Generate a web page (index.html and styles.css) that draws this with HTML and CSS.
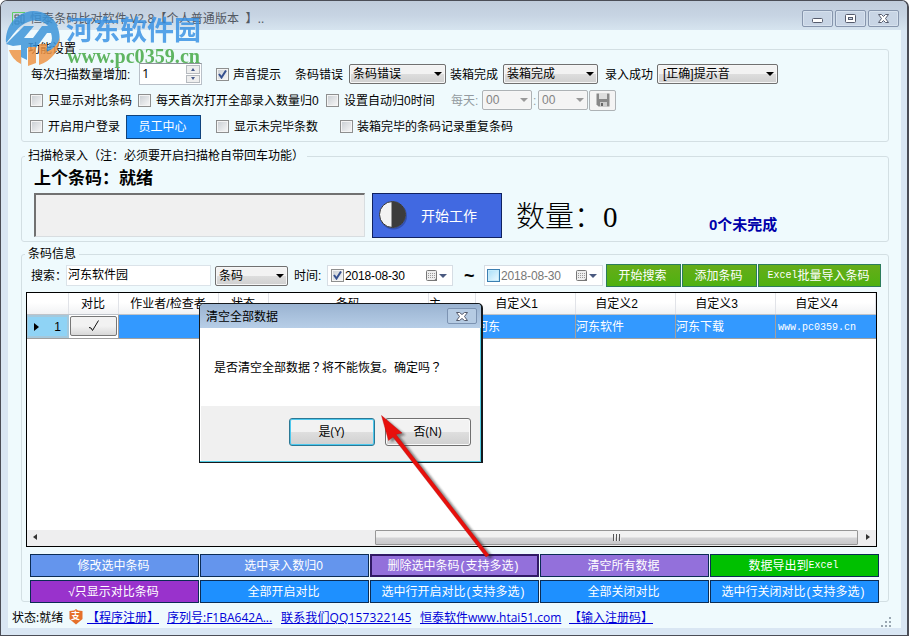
FILE: index.html
```html
<!DOCTYPE html>
<html lang="zh-CN">
<head>
<meta charset="utf-8">
<title>恒泰条码比对软件</title>
<link rel="stylesheet" href="styles.css">
</head>
<body>
<div class="window">
  <header class="titlebar">
    <svg class="app-icon" width="14" height="14" viewBox="0 0 14 14"><path d="M.5 13.500V.5H13" fill="none" stroke="#5fcf65"/><path d="M3 3h4v3H3zm6 0h3v8H9zM3 9h4v3H3z" fill="none" stroke="#555"/></svg>
    <span class="title">恒泰条码比对软件 V2.8【个人普通版本&nbsp; 】..</span>
    <div class="caption-buttons">
      <span class="cap"><svg width="30" height="16"><rect x="9.500" y="7.500" width="10" height="4" rx="1" fill="#fff" stroke="#555b6c"/></svg></span>
      <span class="cap"><svg width="30" height="16"><rect x="9.500" y="3.500" width="10" height="8" rx="1" fill="#fff" stroke="#555b6c"/><rect x="12.500" y="6.500" width="4" height="2" fill="#ccd7e7" stroke="#555b6c"/></svg></span>
      <span class="cap"><svg width="30" height="16"><path d="M9.500 3.500h3l2 2 2-2h3l-3 4 3 4h-3l-2-2-2 2h-3l3-4z" fill="#fff" stroke="#555b6c"/></svg></span>
    </div>
  </header>
  <main class="client">
    <section class="group settings">
      <div class="legend">功能设置</div>
      <div class="row row1">
        <span class="indent">每次扫描数量增加:</span>
        <div class="spinner"><span>1</span><div class="spin-buttons"><i><b class="up"></b></i><i><b class="down"></b></i></div></div>
        <span class="check"><svg width="9" height="9"><path d="M1 4l2.500 3.500L8 .5" /></svg></span><span>声音提示</span>
        <span>条码错误</span><div class="select w97">条码错误</div>
        <span>装箱完成</span><div class="select w95">装箱完成</div>
        <span>录入成功</span><div class="select bracketed">[正确]提示音</div>
      </div>
      <div class="row row2">
        <span class="check"></span><span>只显示对比条码</span>
        <span class="check"></span><span>每天首次打开全部录入数量归0</span>
        <span class="check"></span><span>设置自动归0时间</span>
        <span class="muted">每天:</span><div class="select disabled">00</div><span class="muted">:</span><div class="select disabled">00</div>
        <div class="save"><svg width="14" height="14"><path d="M.5.5h13v13h-11l-2-2z" fill="#888"/><path d="M3 0h8v6H3z" fill="#ddd"/><path d="M4 9h7v5H4z" fill="#ccc"/><path d="M5 10h2v3H5z" fill="#666"/></svg></div>
      </div>
      <div class="row row3">
        <span class="check"></span><span>开启用户登录</span><button class="staff">员工中心</button>
        <span class="check"></span><span>显示未完毕条数</span>
        <span class="check"></span><span>装箱完毕的条码记录重复条码</span>
      </div>
    </section>
    <section class="group scan">
      <div class="legend">扫描枪录入（注：必须要开启扫描枪自带回车功能）</div>
      <div class="last-code">上个条码：就绪</div>
      <div class="scan-row">
        <div class="scan-input"></div>
        <button class="start"><svg width="30" height="30"><circle cx="15.500" cy="16" r="13.500" fill="#263878" opacity=".5"/><circle cx="14.500" cy="14.500" r="13" fill="#f3f3f3" stroke="#333"/><path d="M13.500 1.500h1a13 13 0 0 1 0 26h-1z" fill="#3c3c3c"/></svg><span>开始工作</span></button>
        <div class="count">数量：<span>0</span></div>
        <div class="pending">0个未完成</div>
      </div>
    </section>
    <section class="group info">
      <div class="legend">条码信息</div>
      <div class="search-row">
        <span class="indent">搜索：</span><div class="input">河东软件园</div><div class="select w73">条码</div>
        <span>时间:</span>
        <div class="date"><span class="check"><svg width="9" height="9"><path d="M1 4l2.500 3.500L8 .5" /></svg></span><span class="day">2018-08-30</span><svg class="cal" width="22" height="12"><rect x=".5" y=".5" width="10" height="10" rx="1" fill="#eee" stroke="#777"/><path d="M2 3.500h7M2 5.500h7M2 7.500h7" stroke="#999" stroke-dasharray="1 1"/><path d="M7.500 11L11 7.500V11z" fill="#777"/><path d="M13 4h8l-4 4z" fill="#4a5a80"/></svg></div>
        <span class="tilde">~</span>
        <div class="date off"><span class="check hot"></span><span class="day">2018-08-30</span><svg class="cal" width="22" height="12"><rect x=".5" y=".5" width="10" height="10" rx="1" fill="#eee" stroke="#777"/><path d="M2 3.500h7M2 5.500h7M2 7.500h7" stroke="#999" stroke-dasharray="1 1"/><path d="M7.500 11L11 7.500V11z" fill="#777"/><path d="M13 4h8l-4 4z" fill="#4a5a80"/></svg></div>
        <button class="green">开始搜索</button><button class="green">添加条码</button><button class="green"><span class="mono">Excel</span>批量导入条码</button>
      </div>
      <div class="table">
        <div class="tr head"><span></span><span>对比</span><span>作业者/检查者</span><span>状态</span><span>条码</span><span class="left">主</span><span>自定义1</span><span>自定义2</span><span>自定义3</span><span>自定义4</span></div>
        <div class="tr data"><span class="rowhead"><i></i>1</span><span class="tick-cell"><b><svg width="12" height="12"><path d="M1 7.500l2 .5 1.500 2.500L10.500.5" fill="none" stroke="#111"/></svg></b></span><span></span><span></span><span></span><span></span><span>河东</span><span>河东软件</span><span>河东下载</span><span class="mono url">www.pc0359.cn</span></div>
        <div class="blank"></div>
        <div class="scrollbar"><i class="arrow-l"></i><div class="thumb"><i></i><i></i><i></i></div><i class="arrow-r"></i></div>
      </div>
      <div class="actions">
        <button class="corn">修改选中条码</button><button class="corn">选中录入数归0</button><button class="purple focus">删除选中条码<em>(</em>支持多选<em>)</em></button><button class="purple">清空所有数据</button><button class="lime">数据导出到<span class="mono">Excel</span></button>
        <button class="orchid">√只显示对比条码</button><button class="blue">全部开启对比</button><button class="blue">选中行开启对比<em>(</em>支持多选<em>)</em></button><button class="blue">全部关闭对比</button><button class="blue">选中行关闭对比<em>(</em>支持多选<em>)</em></button>
      </div>
    </section>
    <footer class="status">
      <span>状态:就绪</span>
      <span class="shield"><svg width="14" height="16" viewBox="0 0 14 16"><path d="M7 0l2 1.500 4.500.5v8L7 15.500.500 10V2L5 1.500z" fill="#e5702a"/></svg><b>支</b></span>
      <a>【程序注册】</a><a>序列号:F1BA642A...</a><a class="qq">联系我们QQ157322145</a><a>恒泰软件www.htai51.com</a><a>【输入注册码】</a>
      <svg class="grip" width="11" height="11"><path d="M8 0h2v2H8zM4 4h2v2H4zM8 4h2v2H8zM0 8h2v2H0zM4 8h2v2H4zM8 8h2v2H8z" fill="#9aa7b2"/></svg>
    </footer>
  </main>

  <div class="dialog">
    <div class="dialog-title"><span>清空全部数据</span><span class="dialog-close"><svg width="28" height="15"><path d="M8.500 3.500h3l2.500 2 2.500-2h3l-3 4 3 4h-3l-2.500-2-2.500 2h-3l3-4z" fill="#fff" stroke="#555b6c"/></svg></span></div>
    <div class="dialog-body">是否清空全部数据<span class="mark" lang="zh-TW">？</span>将不能恢复。确定吗<span class="mark" lang="zh-TW">？</span></div>
    <div class="dialog-foot"><button class="dlg-btn default">是(Y)</button><button class="dlg-btn">否(N)</button></div>
  </div>

  <svg class="pointer" width="909" height="636">
    <defs><filter id="soft" x="-10%" y="-10%" width="120%" height="120%"><feGaussianBlur stdDeviation="1.200"/></filter></defs>
    <path d="M382 416l20.500 17-5.500 1.500 93 120.500-3.500 2L393 437l-4.500 3.500z" fill="#222" opacity=".5" transform="translate(3 2)" filter="url(#soft)"/>
    <path d="M381.500 415.500l20.500 17.500-6 1.500 93 120.500-3 2L393 437l-4.500 3.500z" fill="#e8100c" stroke="#b80d0d" stroke-width=".4"/>
  </svg>

  <svg class="watermark" width="210" height="72">
    <g opacity=".84">
      <path d="M6 43C5 25 17 12 33 11c11 0 20 6 25 15l-9 1c-5-6-13-8-21-5C17 26 13 36 6 43z" fill="#3b94d9"/>
      <path d="M6 44l18-18h10L24 38h9l9-12h15c6 13 1 25-9 28l-2-6c6-4 7-9 5-15h-4L36 48h-9V60l-6-3V45l-8 1z" fill="#3b94d9"/>
      <path d="M9 50h12v14C15 61 11 56 9 50zm19-3h8v16l-8 3zm11-3h8l-1 8c8-3 12-8 14-15 0 14-9 24-21 28z" fill="#ee9445"/>
    </g>
    <text x="66" y="40" textLength="135" lengthAdjust="spacingAndGlyphs" class="wm-name">河东软件园</text>
    <text x="67" y="63" textLength="133" lengthAdjust="spacingAndGlyphs" class="wm-url">www.pc0359.cn</text>
  </svg>
</div>
</body>
</html>
```
FILE: styles.css
```css
* { box-sizing: border-box; }
body { margin: 0; background: #fff; font: 12px/16px "Liberation Sans", "Noto Sans CJK SC", sans-serif; color: #000; white-space: nowrap; overflow: hidden; }
svg { display: block; }
button { font: inherit; padding: 0; margin: 0; border-radius: 0; color: #fff; display: flex; align-items: center; justify-content: center; white-space: nowrap; }
.window { position: relative; width: 909px; height: 636px; border: 1px solid #4b4d56; border-right-width: 2px; border-radius: 7px 7px 0 0; background: #d9e6f3; overflow: hidden; }
.titlebar { height: 29px; display: flex; background: linear-gradient(#c0ccdb, #c7d4e3 50%, #d6e4ef); padding: 9px 8px 0 11px; }
.app-icon { margin-top: 2px; }
.title { margin-left: 4px; font: 12px/17px "Open Sans", "Noto Sans CJK SC", sans-serif; letter-spacing: 0.1px; color: #525862; flex: 1; }
.caption-buttons { display: flex; gap: 2px; }
.cap { width: 31px; height: 17px; border: 1px solid #8796ad; border-radius: 2px; background: #c8d5e5; box-shadow: inset 0 0 0 1px #d7e2ee; overflow: hidden; }
.client { margin: 0 6px 0 7px; height: 598px; background: #effafd; padding-top: 19px; }
.group { margin-left: 13px; width: 868px; border: 1px solid #d3dfe3; border-radius: 3px; }
.legend { width: max-content; height: 16px; margin: -10px 0 0 3px; padding: 0 3px; line-height: 18px; background: #effafd; }
.settings { height: 93px; }
.row { display: grid; align-items: center; height: 26px; padding-left: 8px; }
.row > span:not(.check) { padding-top: 1px; }
.row1 { margin-top: 5px; grid-template-columns: 109px 77px 17px 62px 54px 101px 53px 102px 52px 121px; }
.row2 { grid-template-columns: 18px 90px 18px 170px 18px 107px 31px 51px 5px 51px 28px; }
.row3 { grid-template-columns: 18px 78px 90px 18px 106px 17px 157px; }
.indent { padding-left: 1px; }
.spinner { width: 63px; height: 22px; border: 1px solid #b9c0c8; border-top-color: #8d9299; background: #fff; display: flex; justify-content: space-between; padding: 1px 1px 1px 2px; font-family: "Open Sans"; font-size: 13px; }
.spin-buttons { width: 14px; display: grid; gap: 1px; }
.spin-buttons i { border: 1px solid #b6babf; background: #eee; display: grid; place-items: center; }
.up, .down { border: 2.5px solid transparent; width: 0; height: 0; }
.up { border-top: 0; border-bottom: 3px solid #45598b; }
.down { border-bottom: 0; border-top: 3px solid #45598b; }
.check { width: 13px; height: 13px; border: 1px solid #8e8f8f; background: linear-gradient(135deg, #c8cdd2, #f8f8f8); box-shadow: inset 0 0 0 1px #f4f4f4; display: block; padding: 1px; }
.check path { fill: none; stroke: #35508f; stroke-width: 2; }
.hot { border-color: #3c7fb1; background: linear-gradient(135deg, #a8def8, #eefaff); box-shadow: inset 0 0 0 1px #c5ebfb; }
.select { height: 20px; border: 1px solid #707070; border-radius: 2px; background: linear-gradient(#f2f2f2 48%, #dddddd 50%, #d0d0d0); box-shadow: inset 0 0 0 1px #f6f6f6; padding-left: 3px; line-height: 20px; display: flex; justify-content: space-between; align-items: center; }
.select::after { content: ""; border: 4px solid transparent; border-top-color: #000; border-bottom: 0; margin-right: 3px; }
.bracketed { padding-left: 5px; }
.w97 { width: 97px; } .w95 { width: 95px; } .w73 { width: 73px; }
.disabled { background: #f4f4f4; border-color: #adb2b5; color: #838383; width: 50px; }
.disabled::after { border-top-color: #999; }
.muted { color: #939aa0; }
.save { width: 27px; height: 21px; border: 1px solid #adb2b5; border-radius: 2px; background: #f4f4f4; display: grid; place-items: center; }
.staff { width: 75px; height: 24px; margin-top: 1px; background: #1e90ff; border: 1px solid #10437c; padding-right: 2px; }
.scan { height: 86px; margin-top: 14px; }
.last-code { margin: 4px 0 0 12px; height: 22px; font-size: 17px; line-height: 24px; font-weight: bold; }
.scan-row { margin: 4px 0 0 12px; height: 45px; display: flex; }
.scan-input { width: 331px; height: 44px; background: #f0f0f0; border: solid #d8dde0; border-width: 2px 1px 1px 2px; border-top-color: #717171; border-left-color: #717171; }
.start { margin-left: 7px; width: 130px; height: 45px; background: #4169e1; border: 1px solid #102160; font-size: 14px; justify-content: flex-start; padding-left: 5px; }
.start svg { margin-top: -1px; }
.start span { margin-left: 13px; }
.count { margin-left: 14px; width: 194px; font-size: 29px; line-height: 43px; font-family: "Noto Sans CJK SC", sans-serif; font-weight: 300; }
.count span { font-family: "Liberation Serif", serif; }
.pending { font-size: 15px; line-height: 20px; margin-top: 22px; font-weight: bold; color: #00a; margin-left: -1px; }
.info { height: 348px; margin-top: 12px; }
.search-row { margin-top: 3px; height: 23px; padding-left: 8px; display: grid; align-items: center; grid-template-columns: 36px 149px 79px 33px 137px 20px 122px 76px 76px 123px; }
.input { width: 145px; height: 21px; background: #fff; border: 1px solid #dbe3e9; padding-left: 1px; line-height: 19px; }
.date { width: 126px; height: 21px; background: #fff; border: 1px solid #d6dde4; display: flex; align-items: center; padding: 0 4px 0 3px; }
.day { margin-left: 1px; flex: 1; letter-spacing: -0.15px; }
.date.off { width: 119px; color: #777; padding: 0 4px 0 2px; }
.tilde { font-size: 18px; font-weight: bold; }
.green { height: 23px; background: linear-gradient(#66ad19, #4eb110); border: 1px solid #2c7c5c; width: 75px; padding-right: 2px; }
.green:last-child { width: 123px; }
.mono { font-family: "Liberation Mono", monospace; font-size: 10px; }
.table { margin: 5px 0 0 4px; width: 851px; height: 255px; border: 1px solid #000; background: #fff; display: flex; flex-direction: column; }
.tr { display: grid; grid-template-columns: 42px 50px 100px 50px 160px 47px 100px 100px 100px 100px; }
.head { height: 22px; background: linear-gradient(#fff 45%, #f1f2f4); border-bottom: 1px solid #bfc3c9; text-align: center; line-height: 23px; }
.head span { border-right: 1px solid #e1e3e8; overflow: hidden; height: 21px; padding-right: 1px; }
.head span:nth-last-child(-n+4) { padding-right: 18px; }
.head .left { text-align: left; }
.data { height: 24px; border-bottom: 1px solid #a0a0a0; background: #3399ff; color: #fff; line-height: 25px; }
.data > span { border-right: 1px solid #a49f9c; overflow: hidden; height: 23px; }
.data > .url { font-size: 10px; padding-left: 2px; border: 0; }
.data .rowhead { display: flex; justify-content: space-between; align-items: center; padding: 1px 6px 0 6px; color: #000; background: #8fd3f5; border: 2px solid #a4c8dc; border-left-width: 1px; }
.rowhead i { border: 4px solid transparent; border-left: 5px solid #000; border-right: 0; }
.data .tick-cell { background: #fff; padding: 1px; }
.tick-cell b { height: 20px; border: 1px solid #777; border-radius: 2px; background: linear-gradient(#f2f2f2 50%, #d8d8d8); display: grid; place-items: center; }
.blank { flex: 1; }
.scrollbar { height: 16px; background: #eeeeef; display: flex; align-items: center; padding: 0 6px 2px 6px; }
.arrow-l, .arrow-r { border: 3.5px solid transparent; }
.arrow-l { border-right: 4px solid #333; border-left: 0; }
.arrow-r { border-left: 4px solid #333; border-right: 0; margin-left: 8px; }
.thumb { margin-left: 338px; width: 483px; height: 15px; border: 1px solid #979797; border-radius: 1px; background: linear-gradient(#f2f2f2 45%, #d4d4d6 55%, #c8c8ca); display: flex; justify-content: center; align-items: center; gap: 1px; }
.thumb i { width: 2px; height: 7px; background: #555; border-right: 1px solid #eee; }
.actions { margin: 7px 0 0 8px; display: grid; grid-template-columns: repeat(5, 169px); grid-auto-rows: 23px; gap: 3px 1px; }
.actions button { border: 1px solid #0b2c54; padding-right: 2px; }
.actions em { font-style: normal; width: 6px; text-align: center; }
.actions .corn { background: #6495ed; }
.actions .purple { background: #9370db; }
.actions .focus { border: 2px solid #301a65; }
.actions .lime { background: #00c000; }
.actions .orchid { background: #9932cc; }
.actions .blue { background: #1e90ff; }
.status { font-family: "Open Sans", "Noto Sans CJK SC", sans-serif; display: grid; grid-template-columns: 57px 18px 80px 114px 139px 149px 312px 14px; height: 22px; line-height: 18px; margin: 7px 0 0 4px; }
.status a { color: #0000d8; text-decoration: underline; }
.status .qq { letter-spacing: 0.13px; }
.shield { display: grid; }
.shield svg, .shield b { grid-area: 1 / 1; }
.shield b { font-size: 9px; line-height: 14px; color: #fff; padding-left: 2px; }
.grip { align-self: end; margin-bottom: 3px; }
.dialog { position: absolute; left: 198px; top: 302px; width: 284px; height: 160px; border: 1px solid #15191d; border-right-width: 2px; border-radius: 5px 5px 0 0; background: #fff; box-shadow: inset -1px -1px #52cbe3; font-family: "Open Sans", "Noto Sans CJK SC", sans-serif; }
.dialog-title { height: 24px; border-radius: 4px 4px 0 0; background: linear-gradient(#9ab3d1, #b7cee7); display: flex; justify-content: space-between; padding: 5px 4px 0 6px; }
.dialog-close { width: 30px; height: 16px; margin-top: -1px; border: 1px solid #7c93b2; border-radius: 2px; background: #b5cbe3; overflow: hidden; }
.dialog-body { height: 78px; padding: 31px 0 0 14px; }
.mark { font-family: "Noto Sans CJK TC", sans-serif; }
.dialog-foot { height: 55px; margin: 0 1px; background: #f0f0f0; display: flex; gap: 10px; padding: 12px 0 0 88px; }
.dlg-btn { width: 86px; height: 28px; color: #000; border: 1px solid #707070; border-radius: 3px; background: linear-gradient(#f2f2f2 48%, #dedede 52%, #d0d0d0); box-shadow: inset 0 0 0 1px #fafafa; padding-right: 1px; }
.default { border-color: #2c7894; box-shadow: inset 0 0 0 1px #4cc8ee; }
.pointer { position: absolute; left: -1px; top: -1px; }
.watermark { position: absolute; left: -1px; top: -1px; }
.wm-name { font: bold 27px "Noto Sans CJK SC", sans-serif; fill: #3590e4; opacity: .82; }
.wm-url { font: bold 20px "Liberation Serif", serif; fill: #4cac4c; opacity: .88; }
```
